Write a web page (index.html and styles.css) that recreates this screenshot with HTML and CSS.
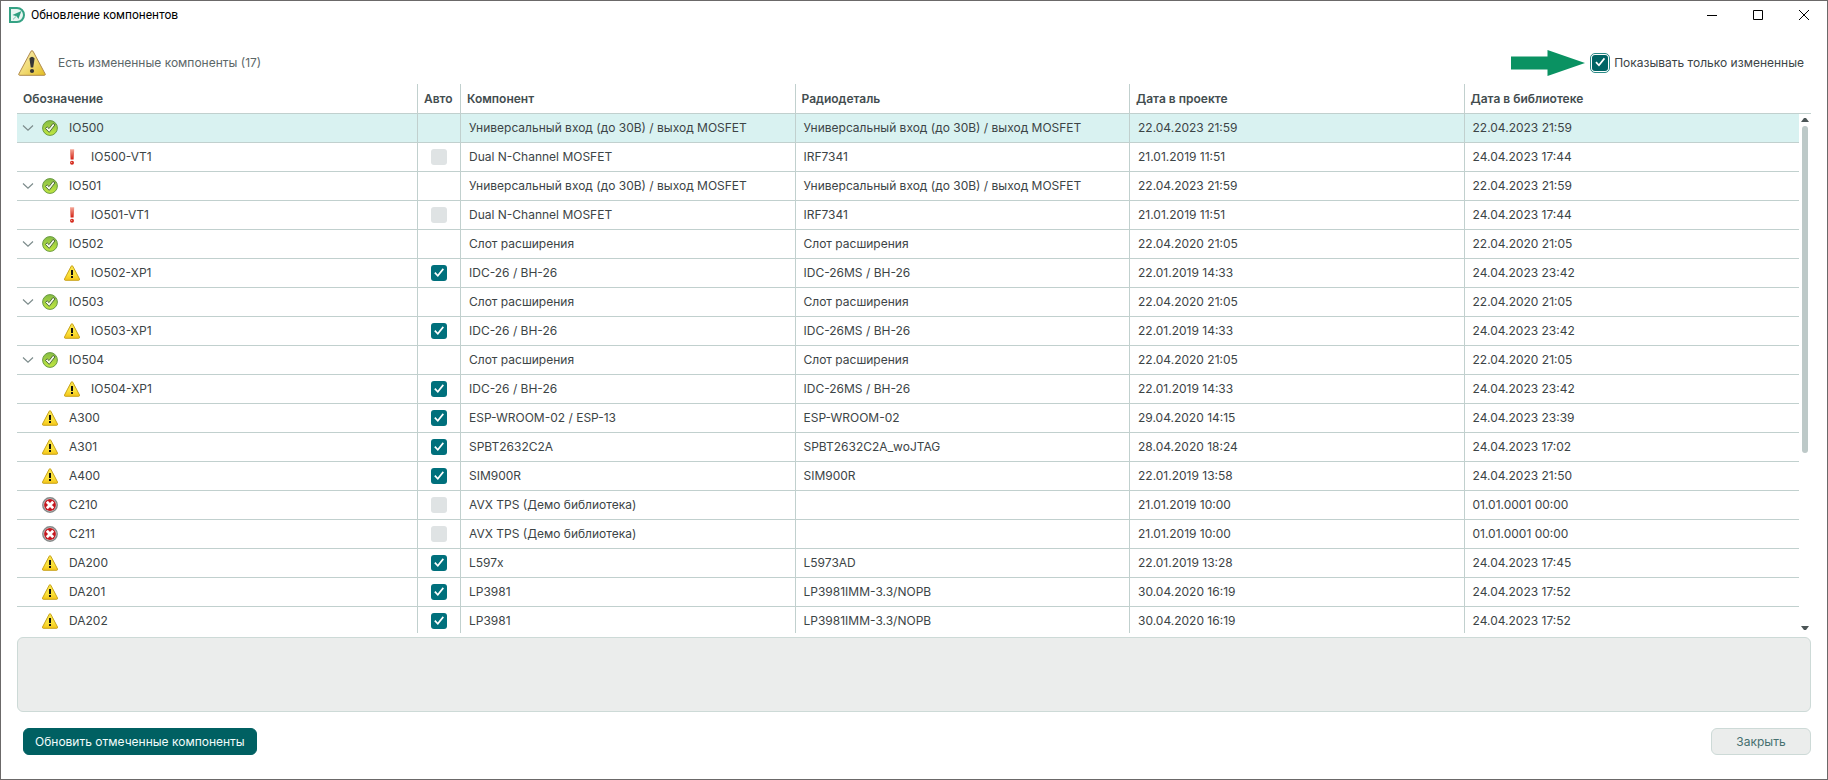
FILE: index.html
```
<!DOCTYPE html>
<html lang="ru">

<head>
    <meta charset="UTF-8">
    <meta name="viewport" content="width=device-width, initial-scale=1.0">
    <title>Обновление компонентов</title>
    <link rel="stylesheet" href="styles.css">
</head>

<body>
    <!-- иконки статусов -->
    <svg class="sprite" aria-hidden="true">
        <defs>
            <linearGradient id="yellow" x1="0" y1="0" x2="0" y2="1">
                <stop offset="0" stop-color="#f6e04a" />
                <stop offset="0.6" stop-color="#fbe33c" />
                <stop offset="1" stop-color="#f4c418" />
            </linearGradient>
            <linearGradient id="gold" x1="0" y1="0" x2="1" y2="1">
                <stop offset="0" stop-color="#f6ecb4" />
                <stop offset="0.5" stop-color="#f2dc78" />
                <stop offset="1" stop-color="#e2bc20" />
            </linearGradient>
            <linearGradient id="green" x1="0" y1="0" x2="0" y2="1">
                <stop offset="0" stop-color="#86bd44" />
                <stop offset="1" stop-color="#c2e840" />
            </linearGradient>
            <linearGradient id="red" x1="0" y1="0" x2="0" y2="1">
                <stop offset="0" stop-color="#f5a898" />
                <stop offset="1" stop-color="#d21f12" />
            </linearGradient>
        </defs>
        <symbol id="warn" viewBox="0 0 16 16">
            <path d="M7.2 1.2Q8 0 8.8 1.2L15.5 14Q15.8 15.2 14.8 15.3H1.2Q.2 15.2.5 14Z" fill="url(#yellow)" stroke="#c9a41c" stroke-width="1" />
            <path d="M7 5h2v5H7zM7 11h2v2H7z" fill="#111" />
        </symbol>
        <symbol id="ok" viewBox="0 0 16 16">
            <circle cx="8" cy="8" r="7.4" fill="url(#green)" stroke="#6a9a44" />
            <path d="M3.4 8.4L5.2 6.8L7 8.6L11 3.4L13 4.8L7.2 12.4Z" fill="#f4fae8" stroke="#4f6a3c" stroke-width="1" stroke-linejoin="round" />
        </symbol>
        <symbol id="bang" viewBox="0 0 16 16">
            <path d="M6 .3H10.2L9.6 10.5H6.6Z" fill="url(#red)" />
            <circle cx="8" cy="13.8" r="2" fill="#d4281c" />
            <circle cx="7.6" cy="13.4" r=".7" fill="#f0a090" />
        </symbol>
        <symbol id="fail" viewBox="0 0 16 16">
            <circle cx="8" cy="8" r="7.2" fill="#d4d6d6" stroke="#858989" stroke-width="1.4" />
            <circle cx="8" cy="8" r="5.9" fill="#c5161d" />
            <path d="M4.8 4.8l6.4 6.4M11.2 4.8l-6.4 6.4" stroke="#fff" stroke-width="2.8" />
        </symbol>
        <symbol id="chevron" viewBox="0 0 16 16">
            <path d="M3 5.5l5 4.7 5-4.7" fill="none" stroke="#7d8c8c" stroke-width="1.2" />
        </symbol>
    </svg>

    <div class="window">
        <header class="titlebar">
            <svg class="icon" viewBox="0 0 16 16">
                <path d="M1 1h7a7 7 0 0 1 0 14H1z" fill="#eaf6f2" stroke="#35a284" stroke-width="2" />
                <path d="M12.4 4L9.4 12L7.6 9.2L3.4 8Z" fill="#2f9f80" />
                <path d="M7.4 9.2L4 12.4" stroke="#7cc5b0" />
            </svg>
            <h1 class="title">Обновление компонентов</h1>
            <div class="window-controls">
                <button type="button" aria-label="Свернуть"><svg viewBox="0 0 10 10"><path d="M0 5.5h10" /></svg></button>
                <button type="button" aria-label="Развернуть"><svg viewBox="0 0 10 10"><path d="M.5 .5h9v9h-9z" /></svg></button>
                <button type="button" aria-label="Закрыть окно"><svg viewBox="0 0 10 10"><path d="M0 0l10 10M10 0L0 10" /></svg></button>
            </div>
        </header>

        <div class="summary">
            <svg class="summary-icon" viewBox="0 0 28 26">
                <path d="M13 1.2Q14 .2 15 1.2L27.2 24Q27.6 25.2 26.4 25.3H1.6Q.4 25.2.8 24Z" fill="url(#gold)" stroke="#b08a4c" />
                <path d="M11.4 8.4Q14 5 16.6 8.4L15.2 17.4H12.8Z" fill="#363636" />
                <circle cx="14" cy="21" r="2.1" fill="#363636" />
            </svg>
            <span class="summary-text">Есть измененные компоненты (17)</span>
            <svg class="arrow" viewBox="0 0 74 26">
                <path d="M0 6.5h36.5V0L74 13L36.5 26V19.5H0z" fill="#0a9262" />
            </svg>
            <label class="filter">
                <input type="checkbox" class="check focused" checked>
                <span>Показывать только измененные</span>
            </label>
        </div>

        <div class="grid">
            <div class="table-wrap">
                <table>
                    <colgroup>
                        <col class="col-ref">
                        <col class="col-auto">
                        <col><col><col><col>
                    </colgroup>
                    <thead>
                        <tr><th>Обозначение</th><th>Авто</th><th>Компонент</th><th>Радиодеталь</th><th>Дата в проекте</th><th>Дата в библиотеке</th></tr>
                    </thead>
                    <tbody>
                        <tr class="selected">
                            <td><div class="ref"><svg class="icon"><use href="#chevron" /></svg><svg class="icon"><use href="#ok" /></svg>IO500</div></td>
                            <td></td><td>Универсальный вход (до 30В) / выход MOSFET</td><td>Универсальный вход (до 30В) / выход MOSFET</td><td>22.04.2023 21:59</td><td>22.04.2023 21:59</td>
                        </tr>
                        <tr>
                            <td><div class="ref child"><svg class="icon"><use href="#bang" /></svg>IO500-VT1</div></td>
                            <td><input type="checkbox" class="check" aria-label="IO500-VT1" disabled></td><td>Dual N-Channel MOSFET</td><td>IRF7341</td><td>21.01.2019 11:51</td><td>24.04.2023 17:44</td>
                        </tr>
                        <tr>
                            <td><div class="ref"><svg class="icon"><use href="#chevron" /></svg><svg class="icon"><use href="#ok" /></svg>IO501</div></td>
                            <td></td><td>Универсальный вход (до 30В) / выход MOSFET</td><td>Универсальный вход (до 30В) / выход MOSFET</td><td>22.04.2023 21:59</td><td>22.04.2023 21:59</td>
                        </tr>
                        <tr>
                            <td><div class="ref child"><svg class="icon"><use href="#bang" /></svg>IO501-VT1</div></td>
                            <td><input type="checkbox" class="check" aria-label="IO501-VT1" disabled></td><td>Dual N-Channel MOSFET</td><td>IRF7341</td><td>21.01.2019 11:51</td><td>24.04.2023 17:44</td>
                        </tr>
                        <tr>
                            <td><div class="ref"><svg class="icon"><use href="#chevron" /></svg><svg class="icon"><use href="#ok" /></svg>IO502</div></td>
                            <td></td><td>Слот расширения</td><td>Слот расширения</td><td>22.04.2020 21:05</td><td>22.04.2020 21:05</td>
                        </tr>
                        <tr>
                            <td><div class="ref child"><svg class="icon"><use href="#warn" /></svg>IO502-XP1</div></td>
                            <td><input type="checkbox" class="check" aria-label="IO502-XP1" checked></td><td>IDC-26 / BH-26</td><td>IDC-26MS / BH-26</td><td>22.01.2019 14:33</td><td>24.04.2023 23:42</td>
                        </tr>
                        <tr>
                            <td><div class="ref"><svg class="icon"><use href="#chevron" /></svg><svg class="icon"><use href="#ok" /></svg>IO503</div></td>
                            <td></td><td>Слот расширения</td><td>Слот расширения</td><td>22.04.2020 21:05</td><td>22.04.2020 21:05</td>
                        </tr>
                        <tr>
                            <td><div class="ref child"><svg class="icon"><use href="#warn" /></svg>IO503-XP1</div></td>
                            <td><input type="checkbox" class="check" aria-label="IO503-XP1" checked></td><td>IDC-26 / BH-26</td><td>IDC-26MS / BH-26</td><td>22.01.2019 14:33</td><td>24.04.2023 23:42</td>
                        </tr>
                        <tr>
                            <td><div class="ref"><svg class="icon"><use href="#chevron" /></svg><svg class="icon"><use href="#ok" /></svg>IO504</div></td>
                            <td></td><td>Слот расширения</td><td>Слот расширения</td><td>22.04.2020 21:05</td><td>22.04.2020 21:05</td>
                        </tr>
                        <tr>
                            <td><div class="ref child"><svg class="icon"><use href="#warn" /></svg>IO504-XP1</div></td>
                            <td><input type="checkbox" class="check" aria-label="IO504-XP1" checked></td><td>IDC-26 / BH-26</td><td>IDC-26MS / BH-26</td><td>22.01.2019 14:33</td><td>24.04.2023 23:42</td>
                        </tr>
                        <tr>
                            <td><div class="ref leaf"><svg class="icon"><use href="#warn" /></svg>A300</div></td>
                            <td><input type="checkbox" class="check" aria-label="A300" checked></td><td>ESP-WROOM-02 / ESP-13</td><td>ESP-WROOM-02</td><td>29.04.2020 14:15</td><td>24.04.2023 23:39</td>
                        </tr>
                        <tr>
                            <td><div class="ref leaf"><svg class="icon"><use href="#warn" /></svg>A301</div></td>
                            <td><input type="checkbox" class="check" aria-label="A301" checked></td><td>SPBT2632C2A</td><td>SPBT2632C2A_woJTAG</td><td>28.04.2020 18:24</td><td>24.04.2023 17:02</td>
                        </tr>
                        <tr>
                            <td><div class="ref leaf"><svg class="icon"><use href="#warn" /></svg>A400</div></td>
                            <td><input type="checkbox" class="check" aria-label="A400" checked></td><td>SIM900R</td><td>SIM900R</td><td>22.01.2019 13:58</td><td>24.04.2023 21:50</td>
                        </tr>
                        <tr>
                            <td><div class="ref leaf"><svg class="icon"><use href="#fail" /></svg>C210</div></td>
                            <td><input type="checkbox" class="check" aria-label="C210" disabled></td><td>AVX TPS (Демо библиотека)</td><td></td><td>21.01.2019 10:00</td><td>01.01.0001 00:00</td>
                        </tr>
                        <tr>
                            <td><div class="ref leaf"><svg class="icon"><use href="#fail" /></svg>C211</div></td>
                            <td><input type="checkbox" class="check" aria-label="C211" disabled></td><td>AVX TPS (Демо библиотека)</td><td></td><td>21.01.2019 10:00</td><td>01.01.0001 00:00</td>
                        </tr>
                        <tr>
                            <td><div class="ref leaf"><svg class="icon"><use href="#warn" /></svg>DA200</div></td>
                            <td><input type="checkbox" class="check" aria-label="DA200" checked></td><td>L597x</td><td>L5973AD</td><td>22.01.2019 13:28</td><td>24.04.2023 17:45</td>
                        </tr>
                        <tr>
                            <td><div class="ref leaf"><svg class="icon"><use href="#warn" /></svg>DA201</div></td>
                            <td><input type="checkbox" class="check" aria-label="DA201" checked></td><td>LP3981</td><td>LP3981IMM-3.3/NOPB</td><td>30.04.2020 16:19</td><td>24.04.2023 17:52</td>
                        </tr>
                        <tr>
                            <td><div class="ref leaf"><svg class="icon"><use href="#warn" /></svg>DA202</div></td>
                            <td><input type="checkbox" class="check" aria-label="DA202" checked></td><td>LP3981</td><td>LP3981IMM-3.3/NOPB</td><td>30.04.2020 16:19</td><td>24.04.2023 17:52</td>
                        </tr>
                    </tbody>
                </table>
            </div>
            <div class="scrollbar">
                <svg viewBox="0 0 8 4"><path d="M0 4L3 0h2l3 4z" /></svg>
                <div class="track"><div class="thumb"></div></div>
                <svg viewBox="0 0 8 4"><path d="M0 0h8L5 4H3z" /></svg>
            </div>
        </div>

        <div class="details"></div>

        <footer class="actions">
            <button type="button" class="btn primary">Обновить отмеченные компоненты</button>
            <button type="button" class="btn">Закрыть</button>
        </footer>
    </div>
</body>

</html>
```
FILE: styles.css
```
* {
    box-sizing: border-box;
}

body {
    margin: 0;
    font-family: Inter, "Noto Sans", sans-serif;
    font-size: 12px;
    line-height: 16px;
    color: #3c4446;
}

.sprite {
    position: absolute;
    width: 0;
    height: 0;
}

.window {
    display: flex;
    flex-direction: column;
    height: 100vh;
    padding: 0 16px 24px;
    border: 1px solid #6b6969;
    background-color: #fff;
}

.icon {
    flex: none;
    width: 16px;
    height: 16px;
}

/* заголовок окна */
.titlebar {
    display: flex;
    align-items: center;
    gap: 6px;
    height: 28px;
    margin: 0 -8px;
}

.title {
    margin: 0;
    font-family: Roboto, "Noto Sans", sans-serif;
    font-size: 12px;
    font-weight: 400;
    color: #000;
}

.window-controls {
    display: flex;
    margin-left: auto;
    margin-right: -8px;
}

.window-controls button {
    display: flex;
    align-items: center;
    justify-content: center;
    width: 46px;
    height: 28px;
    padding: 0;
    border: 0;
    background: none;
}

.window-controls svg {
    width: 10px;
    height: 10px;
    fill: none;
    stroke: #000;
}

/* строка состояния */
.summary {
    display: flex;
    align-items: center;
    height: 55px;
    padding-top: 12px;
    padding-right: 7px;
}

.summary-icon {
    width: 28px;
    height: 26px;
    margin: 0 12px 0 1px;
}

.summary-text {
    color: #5b6768;
}

.arrow {
    width: 74px;
    height: 26px;
    margin-left: auto;
    margin-right: 7px;
}

.filter {
    display: flex;
    align-items: center;
    gap: 6px;
}

.check {
    appearance: none;
    display: block;
    width: 16px;
    height: 16px;
    margin: 0;
    border-radius: 3px;
    background-color: #dfe3e4;
}

.check:checked {
    background-color: #00707c;
}

.check:checked::after {
    content: "";
    display: block;
    width: 16px;
    height: 16px;
    background-color: #fff;
    clip-path: polygon(20% 52%, 28% 44%, 42% 59%, 73% 21%, 81% 28%, 43% 75%);
}

.check.focused {
    background-color: #006464;
    outline: 1px solid #2a8a86;
    outline-offset: 1px;
}

/* таблица компонентов */
.grid {
    display: flex;
    flex: 1;
    min-height: 0;
}

.table-wrap {
    flex: 1;
    overflow-y: auto;
    scrollbar-width: none;
}

table {
    width: 100%;
    table-layout: fixed;
    border-collapse: separate;
    border-spacing: 0;
}

.col-ref {
    width: 401px;
}

.col-auto {
    width: 43px;
}

th,
td {
    height: 29px;
    padding: 0 8px;
    border-right: 1px solid #c1d0ce;
    border-bottom: 1px solid #c1d0ce;
    text-align: left;
    white-space: nowrap;
}

th {
    position: sticky;
    top: 0;
    height: 30px;
    padding: 0 6px;
    background-color: #fff;
    font-weight: 600;
    color: #434d4f;
}

th:last-child,
td:last-child {
    border-right: 0;
}

td:first-child {
    padding-left: 3px;
}

td .check {
    margin-left: 5px;
}

.selected td {
    background-color: #d9f2f1;
}

.ref {
    display: flex;
    align-items: center;
}

.ref .icon {
    margin-right: 11px;
}

.ref .icon:first-child:not(:only-of-type) {
    margin-right: 6px;
}

.ref.leaf {
    padding-left: 22px;
}

.ref.child {
    padding-left: 44px;
}

.scrollbar {
    display: flex;
    flex-direction: column;
    align-items: center;
    width: 12px;
    margin-top: 29px;
    padding: 4px 0 3px;
    border-top: 1px solid #c1d0ce;
}

.scrollbar svg {
    width: 8px;
    height: 4px;
    fill: #4c5657;
}

.track {
    flex: 1;
    width: 6px;
    padding: 4px 0;
}

.thumb {
    height: 66%;
    border-radius: 3px;
    background-color: #bdc9c8;
}

.details {
    height: 75px;
    margin-top: 4px;
    border: 1px solid #cddad7;
    border-radius: 6px;
    background-color: #ebedec;
}

.actions {
    display: flex;
    justify-content: space-between;
    margin-top: 16px;
    padding-left: 6px;
}

.btn {
    min-width: 100px;
    height: 27px;
    padding: 0 11px;
    border: 1px solid #cddad7;
    border-radius: 6px;
    background-color: #ebedec;
    font-family: inherit;
    font-size: 12px;
    color: #46706f;
}

.btn.primary {
    border-color: #006062;
    background-color: #006062;
    color: #f2fcfb;
}
```
